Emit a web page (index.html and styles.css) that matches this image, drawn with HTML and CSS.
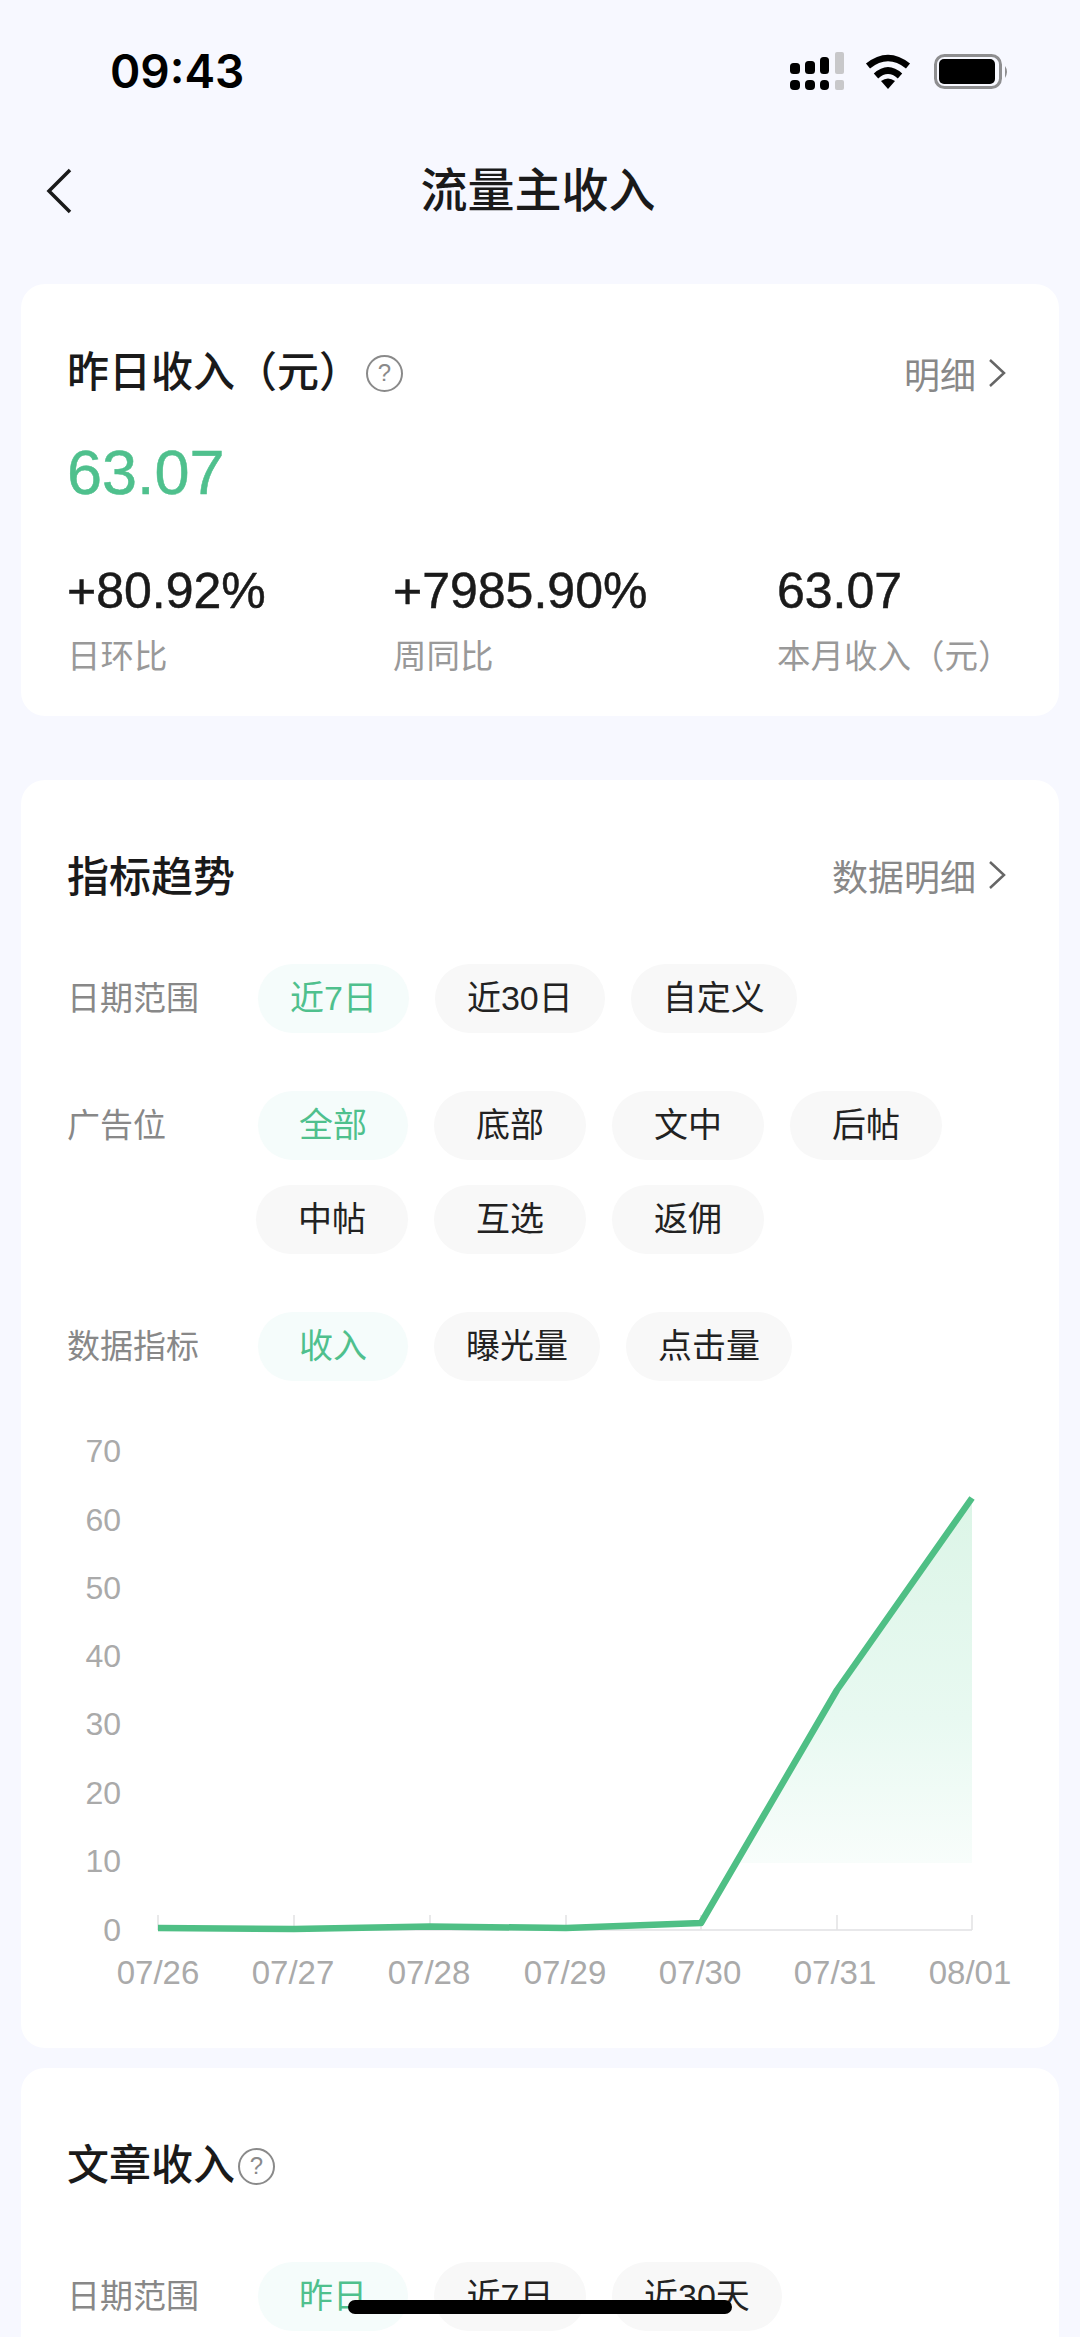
FILE: index.html
```html
<!DOCTYPE html>
<html lang="zh-CN">
<head>
    <meta charset="UTF-8">
    <meta name="viewport" content="width=device-width, initial-scale=1.0">
    <title>流量主收入</title>
    <link rel="stylesheet" href="styles.css">
</head>
<body>
    <div class="page">
        <div class="status">
            <span class="time">09:43</span>
            <div class="status-icons">
                <svg class="signal" width="54" height="38" viewBox="0 0 54 38">
                    <rect x="0" y="11" width="10" height="11" rx="3.5" fill="#000"/>
                    <rect x="15" y="9" width="10" height="13" rx="3.5" fill="#000"/>
                    <rect x="30" y="5" width="9" height="17" rx="3.5" fill="#000"/>
                    <rect x="45" y="0" width="9" height="22" rx="2" fill="#c8c8ca"/>
                    <rect x="0" y="28" width="10" height="10" rx="4" fill="#000"/>
                    <rect x="15" y="28" width="10" height="10" rx="4" fill="#000"/>
                    <rect x="30" y="28" width="9" height="10" rx="4" fill="#000"/>
                    <rect x="45" y="28" width="9" height="10" rx="2" fill="#c8c8ca"/>
                </svg>
                <svg class="wifi" width="46" height="35" viewBox="0 0 46 35">
                    <path d="M3 12Q23 -4 43 12" fill="none" stroke="#000" stroke-width="6.5"/>
                    <path d="M11 22Q23 11 35 22" fill="none" stroke="#000" stroke-width="6.5"/>
                    <path d="M16 27Q23 22 30 27L23 35Z" fill="#000"/>
                </svg>
                <svg class="battery" width="75" height="35" viewBox="0 0 75 35">
                    <rect x="1.5" y="1.5" width="65" height="32" rx="9" fill="none" stroke="#8e8e90" stroke-width="3"/>
                    <rect x="5" y="5" width="56" height="25" rx="5" fill="#000"/>
                    <path d="M71 12Q75 17.500 71 24Z" fill="#8e8e90"/>
                </svg>
            </div>
        </div>

        <div class="nav">
            <svg class="back" width="26" height="46" viewBox="0 0 26 46">
                <path d="M24 2L3 23L24 44" fill="none" stroke="#1a1a1a" stroke-width="3.500"/>
            </svg>
            <h1 class="nav-title">流量主收入</h1>
        </div>

        <!-- yesterday income -->
        <section class="card card-income">
            <div class="card-head">
                <div class="card-title">昨日收入（元）<span class="help help-wide">?</span></div>
                <a class="head-link">明细
                    <svg class="chevron" width="18" height="28" viewBox="0 0 18 28"><path d="M2 1L16 14L2 27" fill="none" stroke="#666" stroke-width="2.500"/></svg>
                </a>
            </div>
            <div class="big-value">63.07</div>
            <div class="stats">
                <div>
                    <div class="stat-value">+80.92%</div>
                    <div class="stat-label">日环比</div>
                </div>
                <div>
                    <div class="stat-value">+7985.90%</div>
                    <div class="stat-label">周同比</div>
                </div>
                <div>
                    <div class="stat-value">63.07</div>
                    <div class="stat-label">本月收入（元）</div>
                </div>
            </div>
        </section>

        <!-- trend -->
        <section class="card card-trend">
            <div class="card-head">
                <div class="card-title">指标趋势</div>
                <a class="head-link head-link-up">数据明细
                    <svg class="chevron" width="18" height="28" viewBox="0 0 18 28"><path d="M2 1L16 14L2 27" fill="none" stroke="#666" stroke-width="2.500"/></svg>
                </a>
            </div>

            <div class="filter">
                <div class="filter-label">日期范围</div>
                <div class="chips">
                    <span class="chip on">近7日</span>
                    <span class="chip">近30日</span>
                    <span class="chip">自定义</span>
                </div>
            </div>
            <div class="filter">
                <div class="filter-label">广告位</div>
                <div class="chips">
                    <span class="chip on">全部</span>
                    <span class="chip">底部</span>
                    <span class="chip">文中</span>
                    <span class="chip">后帖</span>
                    <span class="chip">中帖</span>
                    <span class="chip">互选</span>
                    <span class="chip">返佣</span>
                </div>
            </div>
            <div class="filter">
                <div class="filter-label">数据指标</div>
                <div class="chips">
                    <span class="chip on">收入</span>
                    <span class="chip">曝光量</span>
                    <span class="chip">点击量</span>
                </div>
            </div>

            <!-- viewBox uses page coordinates -->
            <svg class="chart" width="1038" height="638" viewBox="21 1410 1038 638">
                <defs>
                    <linearGradient id="areaFill" gradientUnits="userSpaceOnUse" x1="0" y1="1498" x2="0" y2="1863">
                        <stop offset="0" stop-color="#dcf5e7"/>
                        <stop offset="0.6" stop-color="#e8f9f1"/>
                        <stop offset="1" stop-color="#f8fdfb"/>
                    </linearGradient>
                </defs>
                <g class="y-labels">
                    <text x="121" y="1462">70</text>
                    <text x="121" y="1531">60</text>
                    <text x="121" y="1599">50</text>
                    <text x="121" y="1667">40</text>
                    <text x="121" y="1735">30</text>
                    <text x="121" y="1804">20</text>
                    <text x="121" y="1872">10</text>
                    <text x="121" y="1941">0</text>
                </g>
                <path d="M158 1930H972" stroke="#e8e8ea" stroke-width="2" fill="none"/>
                <path d="M158 1915V1930M294 1915V1930M430 1915V1930M566 1915V1930M701 1915V1930M837 1915V1930M972 1915V1930" stroke="#e2e2e4" stroke-width="1.500" fill="none"/>
                <polygon points="972,1498 837,1690 736,1863 972,1863" fill="url(#areaFill)"/>
                <polyline points="158,1928 294,1929 430,1926.500 566,1928 701,1923 837,1690 972,1498" fill="none" stroke="#4fbf85" stroke-width="6.500" stroke-linejoin="round"/>
                <g class="x-labels">
                    <text x="158" y="1984">07/26</text>
                    <text x="293" y="1984">07/27</text>
                    <text x="429" y="1984">07/28</text>
                    <text x="565" y="1984">07/29</text>
                    <text x="700" y="1984">07/30</text>
                    <text x="835" y="1984">07/31</text>
                    <text x="970" y="1984">08/01</text>
                </g>
            </svg>
        </section>

        <!-- article income, runs off the bottom -->
        <section class="card card-article">
            <div class="card-title">文章收入<span class="help">?</span></div>
            <div class="filter">
                <div class="filter-label">日期范围</div>
                <div class="chips">
                    <span class="chip on">昨日</span>
                    <span class="chip">近7日</span>
                    <span class="chip">近30天</span>
                </div>
            </div>
        </section>

        <div class="home-bar"></div>
    </div>
</body>
</html>
```

FILE: styles.css
```css
* {
    box-sizing: border-box;
}
body {
    margin: 0;
    background-color: #f7f8ff;
    font-family: "Liberation Sans", "Noto Sans CJK SC", sans-serif;
    color: #1a1a1a;
}
.page {
    position: relative;
    width: 1080px;
    height: 2337px;
    overflow: hidden;
}

/* Status bar */
.status {
    display: flex;
    justify-content: space-between;
    align-items: center;
    height: 142px;
    padding: 0 71px 0 110px;
}
.time {
    font-family: Inter, sans-serif;
    font-size: 46px;
    font-weight: 600;
    color: #000;
}
.status-icons {
    display: flex;
    align-items: center;
    gap: 21px;
}
.status-icons svg {
    display: block;
}
.status-icons .battery {
    margin-left: 2px;
}

/* Nav */
.nav {
    display: flex;
    align-items: center;
    height: 98px;
    padding-left: 46px;
}
.nav-title {
    flex: 1;
    margin: 0 0 0 -76px;
    text-align: center;
    font-size: 47px;
    font-weight: 500;
    line-height: 56px;
}

/* Cards */
.card {
    margin: 0 21px;
    padding: 0 53px 0 46px;
    background-color: #fff;
    border-radius: 24px;
}
.card-income {
    margin-top: 44px;
    margin-bottom: 64px;
    padding-top: 61px;
    padding-bottom: 37px;
}
.card-trend {
    margin-bottom: 20px;
    padding-top: 69px;
}
.card-article {
    height: 400px;
    padding-top: 70px;
}
.card-head {
    display: flex;
    justify-content: space-between;
    align-items: center;
}
.card-title {
    display: flex;
    align-items: center;
    font-size: 42px;
    font-weight: 500;
    line-height: 56px;
}
.head-link {
    display: flex;
    align-items: center;
    gap: 12px;
    font-size: 36px;
    color: #888;
}
.head-link-up {
    margin-bottom: 5px;
}
.help {
    display: flex;
    justify-content: center;
    align-items: center;
    width: 37px;
    height: 37px;
    margin-left: 3px;
    border: 2px solid #8a8a8a;
    border-radius: 50%;
    font-size: 24px;
    font-weight: 400;
    color: #8a8a8a;
}
.help-wide {
    margin-left: 5px;
}

/* Income */
.big-value {
    margin-top: 36px;
    font-size: 63px;
    line-height: 70px;
    color: #4fc08d;
    -webkit-text-stroke: 0.5px #4fc08d;
}
.stats {
    display: grid;
    grid-template-columns: 326px 384px 1fr;
    margin-top: 56px;
}
.stat-value {
    font-size: 50px;
    line-height: 56px;
    -webkit-text-stroke: 0.5px #1a1a1a;
}
.stat-label {
    margin-top: 16px;
    font-size: 33.5px;
    line-height: 44px;
    color: #999;
    white-space: nowrap;
}

/* Filters */
.filter {
    display: flex;
    margin-top: 58px;
}
.filter-label {
    flex: none;
    width: 189px;
    font-size: 33px;
    line-height: 69px;
    color: #888;
}
.chips {
    display: flex;
    flex-wrap: wrap;
    gap: 25px 26px;
}
.chip {
    min-width: 152px;
    height: 69px;
    padding: 0 32px;
    border-radius: 35px;
    background-color: #f8f8f8;
    font-size: 34px;
    line-height: 69px;
    text-align: center;
    color: #222;
}
.chip.on {
    min-width: 150px;
    margin-left: 2px;
    background-color: #f5fcfb;
    color: #4fc08d;
}
.card-article .filter {
    margin-top: 68px;
}

/* Chart */
.chart {
    display: block;
    margin: 29px 0 0 -46px;
}
.y-labels text,
.x-labels text {
    font-size: 32px;
    fill: #aaa;
}
.x-labels text {
    font-size: 33px;
    text-anchor: middle;
}
.y-labels text {
    text-anchor: end;
}

.home-bar {
    position: absolute;
    left: 348px;
    top: 2300px;
    width: 384px;
    height: 14px;
    border-radius: 7px;
    background-color: #000;
}
```
